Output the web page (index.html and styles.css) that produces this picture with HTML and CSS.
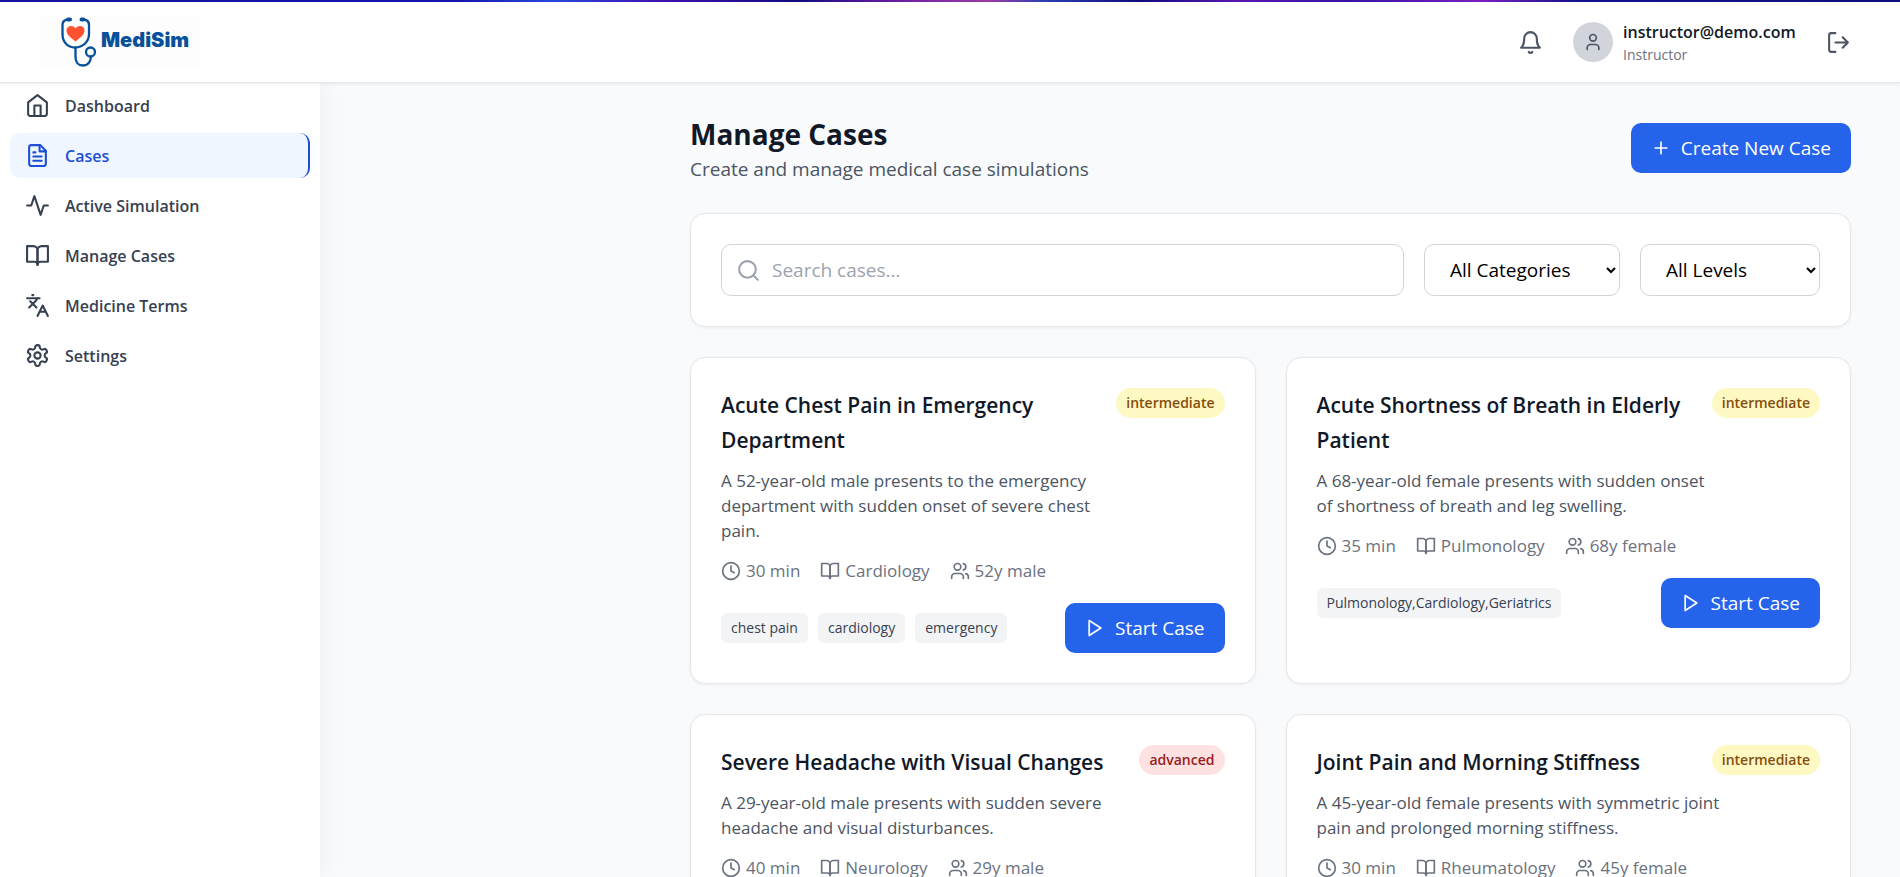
FILE: index.html
```html
<!DOCTYPE html>
<html lang="en">
<head>
<meta charset="utf-8">
<title>MediSim - Manage Cases</title>
<link rel="stylesheet" href="styles.css">
</head>
<body>
<svg class="sprite" aria-hidden="true">
  <symbol id="i-clock" viewBox="0 0 24 24"><circle cx="12" cy="12" r="10"/><path d="M12 6v6l4 2"/></symbol>
  <symbol id="i-book" viewBox="0 0 24 24"><path d="M2 3h6a4 4 0 0 1 4 4v14a3 3 0 0 0-3-3H2z"/><path d="M22 3h-6a4 4 0 0 0-4 4v14a3 3 0 0 1 3-3h7z"/></symbol>
  <symbol id="i-users" viewBox="0 0 24 24"><path d="M16 21v-2a4 4 0 0 0-4-4H6a4 4 0 0 0-4 4v2"/><circle cx="9" cy="7" r="4"/><path d="M22 21v-2a4 4 0 0 0-3-3.87"/><path d="M16 3.13a4 4 0 0 1 0 7.75"/></symbol>
  <symbol id="i-play" viewBox="0 0 24 24"><path d="M5 3l14 9-14 9V3z"/></symbol>
</svg>
<div class="topline"></div>
<header class="header">
  <a class="logo" href="#">
    <svg class="logo-mark" viewBox="0 0 36 50" fill="none" stroke="#07509a" stroke-width="2.300" stroke-linecap="round">
      <path d="M8 2.500C4 2.500 1.500 4 1.500 8v9c0 8 5 13.500 12.500 13.500S28 25 28 17V8c0-4-2-5.500-6.500-5.500"/>
      <path d="M7 2.500h2M20.500 2.500h2" stroke-width="4"/>
      <path d="M14.500 31v9c0 5 3 8.500 7.500 8.500s7.500-3 8-9"/>
      <circle cx="29.500" cy="35" r="4.500"/>
      <path d="M14.500 24.500C10 20.500 5.500 18 5.500 13.500c0-5 6.500-6 9-2 2.500-4 9-3 9 2 0 4.500-4.500 7-9 11z" fill="#ff5130" stroke="none"/>
    </svg>
    <span class="logo-name">MediSim</span>
  </a>
  <div class="account">
    <button class="icon-btn" aria-label="Notifications"><svg class="icon icon-lg" viewBox="0 0 24 24"><path d="M6 8a6 6 0 0 1 12 0c0 7 3 9 3 9H3s3-2 3-9"/><path d="M10.300 21a1.940 1.940 0 0 0 3.400 0"/></svg></button>
    <div class="user">
      <span class="avatar"><svg class="icon" viewBox="0 0 24 24"><path d="M19 21v-2a4 4 0 0 0-4-4H9a4 4 0 0 0-4 4v2"/><circle cx="12" cy="7" r="4"/></svg></span>
      <div class="user-text"><div class="user-mail">instructor@demo.com</div><div class="user-role">Instructor</div></div>
    </div>
    <button class="icon-btn" aria-label="Log out"><svg class="icon icon-lg" viewBox="0 0 24 24"><path d="M9 21H5a2 2 0 0 1-2-2V5a2 2 0 0 1 2-2h4"/><path d="M16 17l5-5-5-5M21 12H9"/></svg></button>
  </div>
</header>
<div class="layout">
  <nav class="sidebar">
    <a class="nav-item" href="#"><svg class="icon icon-lg" viewBox="0 0 24 24"><path d="M3 9l9-7 9 7v11a2 2 0 0 1-2 2H5a2 2 0 0 1-2-2z"/><path d="M9 22V12h6v10"/></svg>Dashboard</a>
    <a class="nav-item active" href="#"><svg class="icon icon-lg" viewBox="0 0 24 24"><path d="M14.500 2H6a2 2 0 0 0-2 2v16a2 2 0 0 0 2 2h12a2 2 0 0 0 2-2V7.500L14.500 2z"/><path d="M14 2v6h6M16 13H8M16 17H8M10 9H8"/></svg>Cases</a>
    <a class="nav-item" href="#"><svg class="icon icon-lg" viewBox="0 0 24 24"><path d="M22 12h-4l-3 9L9 3l-3 9H2"/></svg>Active Simulation</a>
    <a class="nav-item" href="#"><svg class="icon icon-lg"><use href="#i-book"/></svg>Manage Cases</a>
    <a class="nav-item" href="#"><svg class="icon icon-lg" viewBox="0 0 24 24"><path d="M5 8l6 6M4 14l6-6 2-3M2 5h12M7 2h1M22 22l-5-10-5 10M14 18h6"/></svg>Medicine Terms</a>
    <a class="nav-item" href="#"><svg class="icon icon-lg" viewBox="0 0 24 24"><path d="M12.220 2h-.44a2 2 0 0 0-2 2v.18a2 2 0 0 1-1 1.730l-.43.250a2 2 0 0 1-2 0l-.15-.08a2 2 0 0 0-2.730.730l-.22.380a2 2 0 0 0 .73 2.730l.15.100a2 2 0 0 1 1 1.720v.51a2 2 0 0 1-1 1.740l-.15.090a2 2 0 0 0-.73 2.730l.22.380a2 2 0 0 0 2.730.730l.15-.08a2 2 0 0 1 2 0l.43.250a2 2 0 0 1 1 1.730V20a2 2 0 0 0 2 2h.44a2 2 0 0 0 2-2v-.18a2 2 0 0 1 1-1.730l.43-.25a2 2 0 0 1 2 0l.15.080a2 2 0 0 0 2.730-.73l.22-.39a2 2 0 0 0-.73-2.730l-.15-.08a2 2 0 0 1-1-1.740v-.5a2 2 0 0 1 1-1.740l.15-.09a2 2 0 0 0 .73-2.730l-.22-.38a2 2 0 0 0-2.730-.73l-.15.080a2 2 0 0 1-2 0l-.43-.25a2 2 0 0 1-1-1.730V4a2 2 0 0 0-2-2z"/><circle cx="12" cy="12" r="3"/></svg>Settings</a>
  </nav>
  <main class="main">
    <div class="page-head">
      <div>
        <h1>Manage Cases</h1>
        <p class="subtitle">Create and manage medical case simulations</p>
      </div>
      <button class="btn"><svg class="icon" viewBox="0 0 24 24"><path d="M5 12h14M12 5v14"/></svg>Create New Case</button>
    </div>
    <form class="panel filters">
      <label class="search">
        <svg class="icon icon-lg" viewBox="0 0 24 24"><circle cx="11" cy="11" r="8"/><path d="M21 21l-4.300-4.300"/></svg>
        <input type="text" placeholder="Search cases..." aria-label="Search cases">
      </label>
      <select class="category" aria-label="Category"><option>All Categories</option></select>
      <select class="level" aria-label="Level"><option>All Levels</option></select>
    </form>
    <div class="cases">
      <article class="panel">
        <div class="case-top">
          <div class="case-text">
            <h2>Acute Chest Pain in Emergency Department</h2>
            <p class="desc">A 52-year-old male presents to the emergency department with sudden onset of severe chest pain.</p>
            <div class="meta"><span><svg class="icon"><use href="#i-clock"/></svg>30 min</span><span><svg class="icon"><use href="#i-book"/></svg>Cardiology</span><span><svg class="icon"><use href="#i-users"/></svg>52y male</span></div>
          </div>
          <span class="badge intermediate">intermediate</span>
        </div>
        <div class="case-foot">
          <div class="tags"><span>chest pain</span><span>cardiology</span><span>emergency</span></div>
          <button class="btn"><svg class="icon"><use href="#i-play"/></svg>Start Case</button>
        </div>
      </article>
      <article class="panel">
        <div class="case-top">
          <div class="case-text">
            <h2>Acute Shortness of Breath in Elderly Patient</h2>
            <p class="desc">A 68-year-old female presents with sudden onset of shortness of breath and leg swelling.</p>
            <div class="meta"><span><svg class="icon"><use href="#i-clock"/></svg>35 min</span><span><svg class="icon"><use href="#i-book"/></svg>Pulmonology</span><span><svg class="icon"><use href="#i-users"/></svg>68y female</span></div>
          </div>
          <span class="badge intermediate">intermediate</span>
        </div>
        <div class="case-foot">
          <div class="tags"><span>Pulmonology,Cardiology,Geriatrics</span></div>
          <button class="btn"><svg class="icon"><use href="#i-play"/></svg>Start Case</button>
        </div>
      </article>
      <article class="panel">
        <div class="case-top">
          <div class="case-text">
            <h2>Severe Headache with Visual Changes</h2>
            <p class="desc">A 29-year-old male presents with sudden severe headache and visual disturbances.</p>
            <div class="meta"><span><svg class="icon"><use href="#i-clock"/></svg>40 min</span><span><svg class="icon"><use href="#i-book"/></svg>Neurology</span><span><svg class="icon"><use href="#i-users"/></svg>29y male</span></div>
          </div>
          <span class="badge advanced">advanced</span>
        </div>
      </article>
      <article class="panel">
        <div class="case-top">
          <div class="case-text">
            <h2>Joint Pain and Morning Stiffness</h2>
            <p class="desc">A 45-year-old female presents with symmetric joint pain and prolonged morning stiffness.</p>
            <div class="meta"><span><svg class="icon"><use href="#i-clock"/></svg>30 min</span><span><svg class="icon"><use href="#i-book"/></svg>Rheumatology</span><span><svg class="icon"><use href="#i-users"/></svg>45y female</span></div>
          </div>
          <span class="badge intermediate">intermediate</span>
        </div>
      </article>
    </div>
  </main>
</div>
</body>
</html>
```

FILE: styles.css
```css
* { box-sizing: border-box; margin: 0; padding: 0; }
body {
  height: 100vh;
  overflow: hidden;
  display: flex;
  flex-direction: column;
  background: #f9fafb;
  color: #111827;
  font: 400 19px/30px "Segoe UI", "Open Sans", "Noto Sans", sans-serif;
}
button, input, select { font: inherit; color: inherit; }
button { border: 0; background: none; cursor: pointer; }
a { color: inherit; text-decoration: none; }
.sprite { position: absolute; width: 0; height: 0; }
.icon {
  width: 20px;
  height: 20px;
  flex: none;
  fill: none;
  stroke: currentColor;
  stroke-width: 2;
  stroke-linecap: round;
  stroke-linejoin: round;
}
.icon-lg { width: 25px; height: 25px; }

.topline {
  height: 2px;
  flex: none;
  background: linear-gradient(90deg, #1414a0, #1616b0 24%, #2a48e0 29%, #4012b0 35%, #120c80 42%, #6a1ea0 47%, #a03aa8 52%, #2a40b0 55%, #120c80 60%, #5a18b0 65%, #3a14a8 71%, #7a20c0 78%, #14128c 83%, #101080);
}
.header {
  flex: none;
  display: flex;
  justify-content: space-between;
  align-items: center;
  height: 81px;
  padding: 0 49px 0 40px;
  background: #fff;
  border-bottom: 1px solid #e5e7eb;
  box-shadow: 0 1px 3px rgba(0, 0, 0, .08);
  z-index: 2;
}
.logo {
  display: flex;
  align-items: center;
  gap: 4px;
  height: 50px;
  padding: 0 12px 0 21px;
  background: #fdfdfd;
}
.logo-mark { width: 36px; height: 50px; }
.logo-name { font: 900 20px/24px Inter, "Liberation Sans", sans-serif; color: #07509a; padding-bottom: 4px; }
.account { display: flex; align-items: center; gap: 25px; color: #4b5563; }
.icon-btn { display: flex; }
.user { display: flex; align-items: center; gap: 10px; margin-left: 5px; }
.avatar {
  display: flex;
  align-items: center;
  justify-content: center;
  width: 40px;
  height: 40px;
  border-radius: 50%;
  background: #d1d5db;
}
.user-text { min-width: 178px; }
.user-mail { font-size: 16px; line-height: 25px; font-weight: 600; color: #111827; }
.user-role { font-size: 14px; line-height: 20px; color: #6b7280; }

.layout { flex: 1; min-height: 0; display: flex; }
.sidebar {
  flex: none;
  width: 320px;
  padding: 0 10px;
  display: flex;
  flex-direction: column;
  gap: 5px;
  background: #fff;
  box-shadow: 0 0 25px rgba(0, 0, 0, .06);
}
.nav-item {
  display: flex;
  align-items: center;
  gap: 15px;
  height: 45px;
  padding: 0 15px;
  border-radius: 10px;
  font-size: 16px;
  font-weight: 600;
  color: #374151;
}
.nav-item.active { background: #eff6ff; color: #1d4ed8; border-right: 2px solid #1d4ed8; }

.main { flex: 1; min-width: 0; margin-left: 320px; padding: 30px 49px 0 50px; }
.page-head { display: flex; justify-content: space-between; align-items: center; margin-bottom: 30px; }
h1 { font-size: 28px; line-height: 42px; font-weight: 700; }
.subtitle { line-height: 28px; color: #4b5563; }
.btn {
  display: flex;
  align-items: center;
  gap: 10px;
  height: 50px;
  padding: 0 20px;
  border-radius: 10px;
  background: #2563eb;
  color: #fff;
}
.panel {
  padding: 30px;
  background: #fff;
  border: 1px solid #e5e7eb;
  border-radius: 15px;
  box-shadow: 0 1px 3px rgba(0, 0, 0, .06);
}
.filters { display: flex; gap: 20px; margin-bottom: 30px; }
.search {
  flex: 1;
  display: flex;
  align-items: center;
  gap: 11px;
  height: 52px;
  padding: 0 14px;
  border: 1px solid #d1d5db;
  border-radius: 10px;
  color: #9ca3af;
}
.search input { flex: 1; min-width: 0; border: 0; outline: 0; background: none; }
.search input::placeholder { color: #9ca3af; }
select {
  height: 52px;
  padding: 0 2px 0 21px;
  border: 1px solid #d1d5db;
  border-radius: 10px;
  background: #fff;
  color: #000;
}
.category { width: 196px; }
.level { width: 180px; }

.cases { display: grid; grid-template-columns: 1fr 1fr; gap: 30px; }
.case-top { display: flex; align-items: flex-start; }
.case-text { flex: 1; min-width: 0; }
h2 { font-size: 21px; line-height: 35px; font-weight: 600; margin-bottom: 10px; }
.desc { font-size: 17px; line-height: 25px; color: #4b5563; margin: 0 -10px 15px 0; }
.meta { display: flex; gap: 20px; font-size: 17px; line-height: 25px; color: #6b7280; }
.meta span { display: flex; align-items: center; gap: 5px; }
.badge { padding: 5px 10px; border-radius: 15px; font-size: 14px; line-height: 20px; font-weight: 600; }
.intermediate { background: #fef9c3; color: #854d0e; }
.advanced { background: #fee2e2; color: #991b1b; }
.case-foot { display: flex; justify-content: space-between; align-items: center; margin-top: 20px; }
.tags { display: flex; gap: 10px; }
.tags span { padding: 5px 10px; border-radius: 6px; background: #f3f4f6; color: #374151; font-size: 14px; line-height: 20px; }
```
